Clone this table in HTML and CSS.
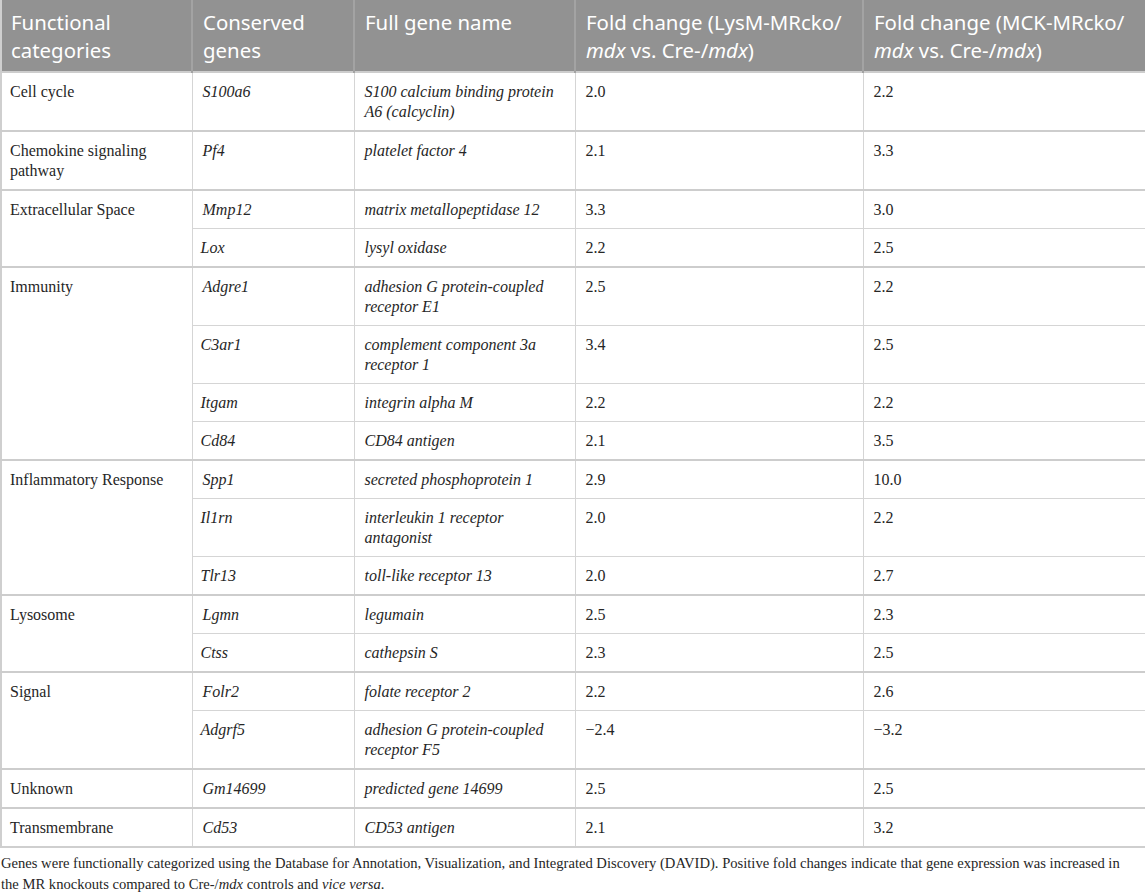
FILE: index.html
```html
<!DOCTYPE html>
<html lang="en">
<head>
  <meta charset="UTF-8">
  <meta name="viewport" content="width=device-width, initial-scale=1.0">
  <title>Conserved genes in MR knockouts</title>
  <link rel="stylesheet" href="styles.css">
</head>
<body>
  <div class="table-wrap">
    <table class="gene-table">
      <colgroup>
        <col class="col-cat">
        <col class="col-gene">
        <col class="col-name">
        <col class="col-lysm">
        <col class="col-mck">
      </colgroup>
      <thead>
        <tr>
          <th>Functional categories</th>
          <th>Conserved genes</th>
          <th>Full gene name</th>
          <th>Fold change (LysM-MRcko/<br><i>mdx</i> vs. Cre-/<i>mdx</i>)</th>
          <th>Fold change (MCK-MRcko/<br><i>mdx</i> vs. Cre-/<i>mdx</i>)</th>
        </tr>
      </thead>
      <tbody>
        <tr class="group-start">
          <td>Cell cycle</td>
          <td class="gene">S100a6</td>
          <td class="gene">S100 calcium binding protein<br>A6 (calcyclin)</td>
          <td>2.0</td>
          <td>2.2</td>
        </tr>
        <tr class="group-start">
          <td>Chemokine signaling<br>pathway</td>
          <td class="gene">Pf4</td>
          <td class="gene">platelet factor 4</td>
          <td>2.1</td>
          <td>3.3</td>
        </tr>
        <tr class="group-start">
          <td rowspan="2">Extracellular Space</td>
          <td class="gene">Mmp12</td>
          <td class="gene">matrix metallopeptidase 12</td>
          <td>3.3</td>
          <td>3.0</td>
        </tr>
        <tr>
          <td class="gene">Lox</td>
          <td class="gene">lysyl oxidase</td>
          <td>2.2</td>
          <td>2.5</td>
        </tr>
        <tr class="group-start">
          <td rowspan="4">Immunity</td>
          <td class="gene">Adgre1</td>
          <td class="gene">adhesion G protein-coupled<br>receptor E1</td>
          <td>2.5</td>
          <td>2.2</td>
        </tr>
        <tr>
          <td class="gene">C3ar1</td>
          <td class="gene">complement component 3a<br>receptor 1</td>
          <td>3.4</td>
          <td>2.5</td>
        </tr>
        <tr>
          <td class="gene">Itgam</td>
          <td class="gene">integrin alpha M</td>
          <td>2.2</td>
          <td>2.2</td>
        </tr>
        <tr>
          <td class="gene">Cd84</td>
          <td class="gene">CD84 antigen</td>
          <td>2.1</td>
          <td>3.5</td>
        </tr>
        <tr class="group-start">
          <td rowspan="3">Inflammatory Response</td>
          <td class="gene">Spp1</td>
          <td class="gene">secreted phosphoprotein 1</td>
          <td>2.9</td>
          <td>10.0</td>
        </tr>
        <tr>
          <td class="gene">Il1rn</td>
          <td class="gene">interleukin 1 receptor<br>antagonist</td>
          <td>2.0</td>
          <td>2.2</td>
        </tr>
        <tr>
          <td class="gene">Tlr13</td>
          <td class="gene">toll-like receptor 13</td>
          <td>2.0</td>
          <td>2.7</td>
        </tr>
        <tr class="group-start">
          <td rowspan="2">Lysosome</td>
          <td class="gene">Lgmn</td>
          <td class="gene">legumain</td>
          <td>2.5</td>
          <td>2.3</td>
        </tr>
        <tr>
          <td class="gene">Ctss</td>
          <td class="gene">cathepsin S</td>
          <td>2.3</td>
          <td>2.5</td>
        </tr>
        <tr class="group-start">
          <td rowspan="2">Signal</td>
          <td class="gene">Folr2</td>
          <td class="gene">folate receptor 2</td>
          <td>2.2</td>
          <td>2.6</td>
        </tr>
        <tr>
          <td class="gene">Adgrf5</td>
          <td class="gene">adhesion G protein-coupled<br>receptor F5</td>
          <td>&minus;2.4</td>
          <td>&minus;3.2</td>
        </tr>
        <tr class="group-start">
          <td>Unknown</td>
          <td class="gene">Gm14699</td>
          <td class="gene">predicted gene 14699</td>
          <td>2.5</td>
          <td>2.5</td>
        </tr>
        <tr class="group-start">
          <td>Transmembrane</td>
          <td class="gene">Cd53</td>
          <td class="gene">CD53 antigen</td>
          <td>2.1</td>
          <td>3.2</td>
        </tr>
      </tbody>
    </table>
    <p class="table-note">Genes were functionally categorized using the Database for Annotation, Visualization, and Integrated Discovery (DAVID). Positive fold changes indicate that gene expression was increased in<br>the MR knockouts compared to Cre-/<i>mdx</i> controls and <i>vice versa</i>.</p>
  </div>
</body>
</html>
```

FILE: styles.css
```css
body {
  margin: 0;
  background: #fff;
  color: #262626;
  font-family: 'Liberation Serif', 'Times New Roman', serif;
}

.table-wrap {
  width: 1145px;
}

.gene-table {
  width: 100%;
  border-collapse: collapse;
  table-layout: fixed;
  border-left: 2px solid #cfcfcf;
  border-right: 2px solid #cfcfcf;
  border-bottom: 2px solid #cfcfcf;
}

.col-cat { width: 191px; }
.col-gene { width: 162px; }
.col-name { width: 221px; }
.col-lysm { width: 288px; }
.col-mck { width: 283px; }

.gene-table th {
  background-color: #929292;
  color: #fff;
  font-family: 'Noto Sans', 'Open Sans', sans-serif;
  font-weight: 400;
  font-size: 20.4px;
  line-height: 28px;
  text-align: left;
  vertical-align: top;
  padding: 8px 10px 7px;
  border-left: 2px solid #a3a3a3;
}

.gene-table th:first-child {
  border-left: none;
  padding-left: 9px;
}

.gene-table td {
  font-size: 16px;
  line-height: 20px;
  vertical-align: top;
  text-align: left;
  padding: 9px 10px 8px;
  border: 1px solid #d5d5d5;
}

.gene-table td:first-child {
  padding-left: 8px;
}

.gene-table td.gene {
  font-style: italic;
}

/* group rows get a heavier line across every column */
.gene-table tr.group-start td {
  border-top: 2px solid #cdcdcd;
}

.table-note {
  margin: 5px 0 0;
  padding: 0 1px;
  font-size: 14.6px;
  line-height: 21px;
  color: #262626;
  white-space: nowrap;
}
```
